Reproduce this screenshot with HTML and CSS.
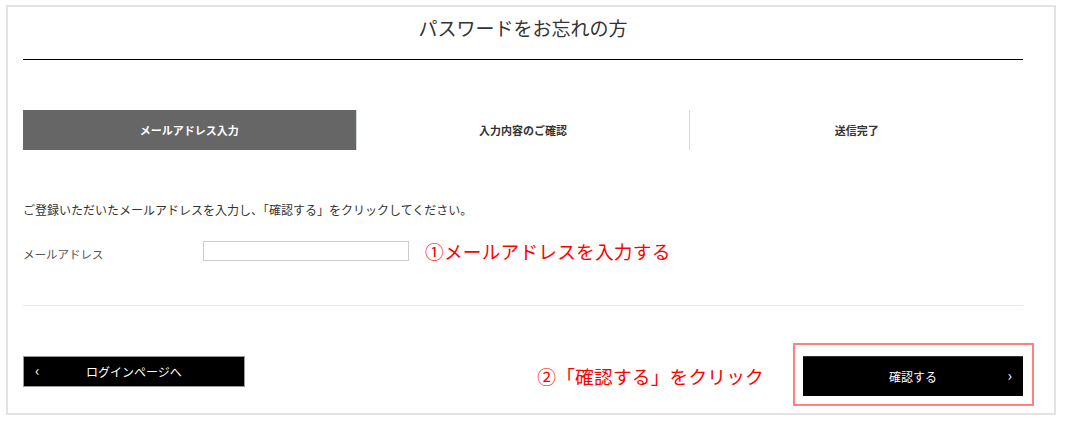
FILE: index.html
```html
<!DOCTYPE html>
<html lang="ja">
<head>
    <meta charset="UTF-8">
    <title>パスワードをお忘れの方</title>
    <link rel="stylesheet" href="styles.css">
</head>
<body>

    <div class="frame">
        <h1 class="title">パスワードをお忘れの方</h1>

        <ol class="steps">
            <li class="step active">メールアドレス入力</li>
            <li class="step">入力内容のご確認</li>
            <li class="step">送信完了</li>
        </ol>

        <p class="lead">ご登録いただいたメールアドレスを入力し、「確認する」をクリックしてください。</p>

        <div class="form-row">
            <label class="form-label" for="email">メールアドレス</label>
            <input class="form-input" type="text" id="email">
            <span class="note">①メールアドレスを入力する</span>
        </div>

        <hr class="divider">

        <div class="actions">
            <a class="btn btn-back" href="#"><span class="arrow">‹</span>ログインページへ</a>
            <div class="confirm-group">
                <span class="note">②「確認する」をクリック</span>
                <div class="highlight">
                    <a class="btn btn-confirm" href="#">確認する<span class="arrow">›</span></a>
                </div>
            </div>
        </div>
    </div>

</body>
</html>
```

FILE: styles.css
```css
body { margin: 0; font-family: "Noto Sans CJK JP", "Noto Sans", sans-serif; color: #333; background: #fff; }

.frame { box-sizing: border-box; width: 1050px; height: 410px; margin: 5px 0 0 6px; border: 2px solid #e3e3e3; padding: 0 31px 0 15px; }

.title { margin: 0; padding: 11px 0 21px; line-height: 20px; font-size: 19px; font-weight: normal; text-align: center; color: #333; border-bottom: 1px solid #000; }

.steps { list-style: none; display: flex; margin: 50px 0 0; padding: 0; height: 40px; }
.step { flex: 1; display: flex; align-items: center; justify-content: center; font-size: 11px; font-weight: bold; color: #333; border-left: 1px solid #d3dadd; }
.step.active { background: #666; color: #fff; border-left: none; }

.lead { margin: 50px 0 0; font-size: 12px; line-height: 20px; color: #333; }

.form-row { display: flex; align-items: flex-start; margin-top: 21px; }
.form-label { width: 180px; font-size: 11.5px; color: #555; padding-top: 3px; line-height: 20px; }
.form-input { box-sizing: border-box; width: 206px; height: 20px; margin: 0; border: 1px solid #ccc; padding: 0 4px; }

.note { color: #f00; font-size: 18.7px; line-height: 22px; letter-spacing: 0.2px; }
.form-row .note { margin: -1px 0 0 16px; }

.divider { margin: 41px 0 0; border: none; border-top: 1px solid #e8e8e8; }

.actions { display: flex; justify-content: space-between; align-items: flex-start; margin-top: 50px; }

.btn { box-sizing: border-box; display: flex; align-items: center; justify-content: center; position: relative; background: #000; color: #fff; font-size: 12px; text-decoration: none; }
.btn .arrow { position: absolute; font-size: 15px; line-height: 1; top: 50%; transform: translateY(-68%); }

.btn-back { width: 222px; height: 31px; border: 1px solid #999; }
.btn-back .arrow { left: 11px; }

.btn-confirm { width: 220px; height: 40px; border-top: 1px solid #333; }
.btn-confirm .arrow { right: 11px; }

.confirm-group { display: flex; align-items: center; }
.confirm-group .note { margin-right: 39px; }

.highlight { position: relative; }
.highlight::after { content: ""; position: absolute; top: -13px; right: -11px; bottom: -10px; left: -10px; border: 2px solid #ff8080; }
```
